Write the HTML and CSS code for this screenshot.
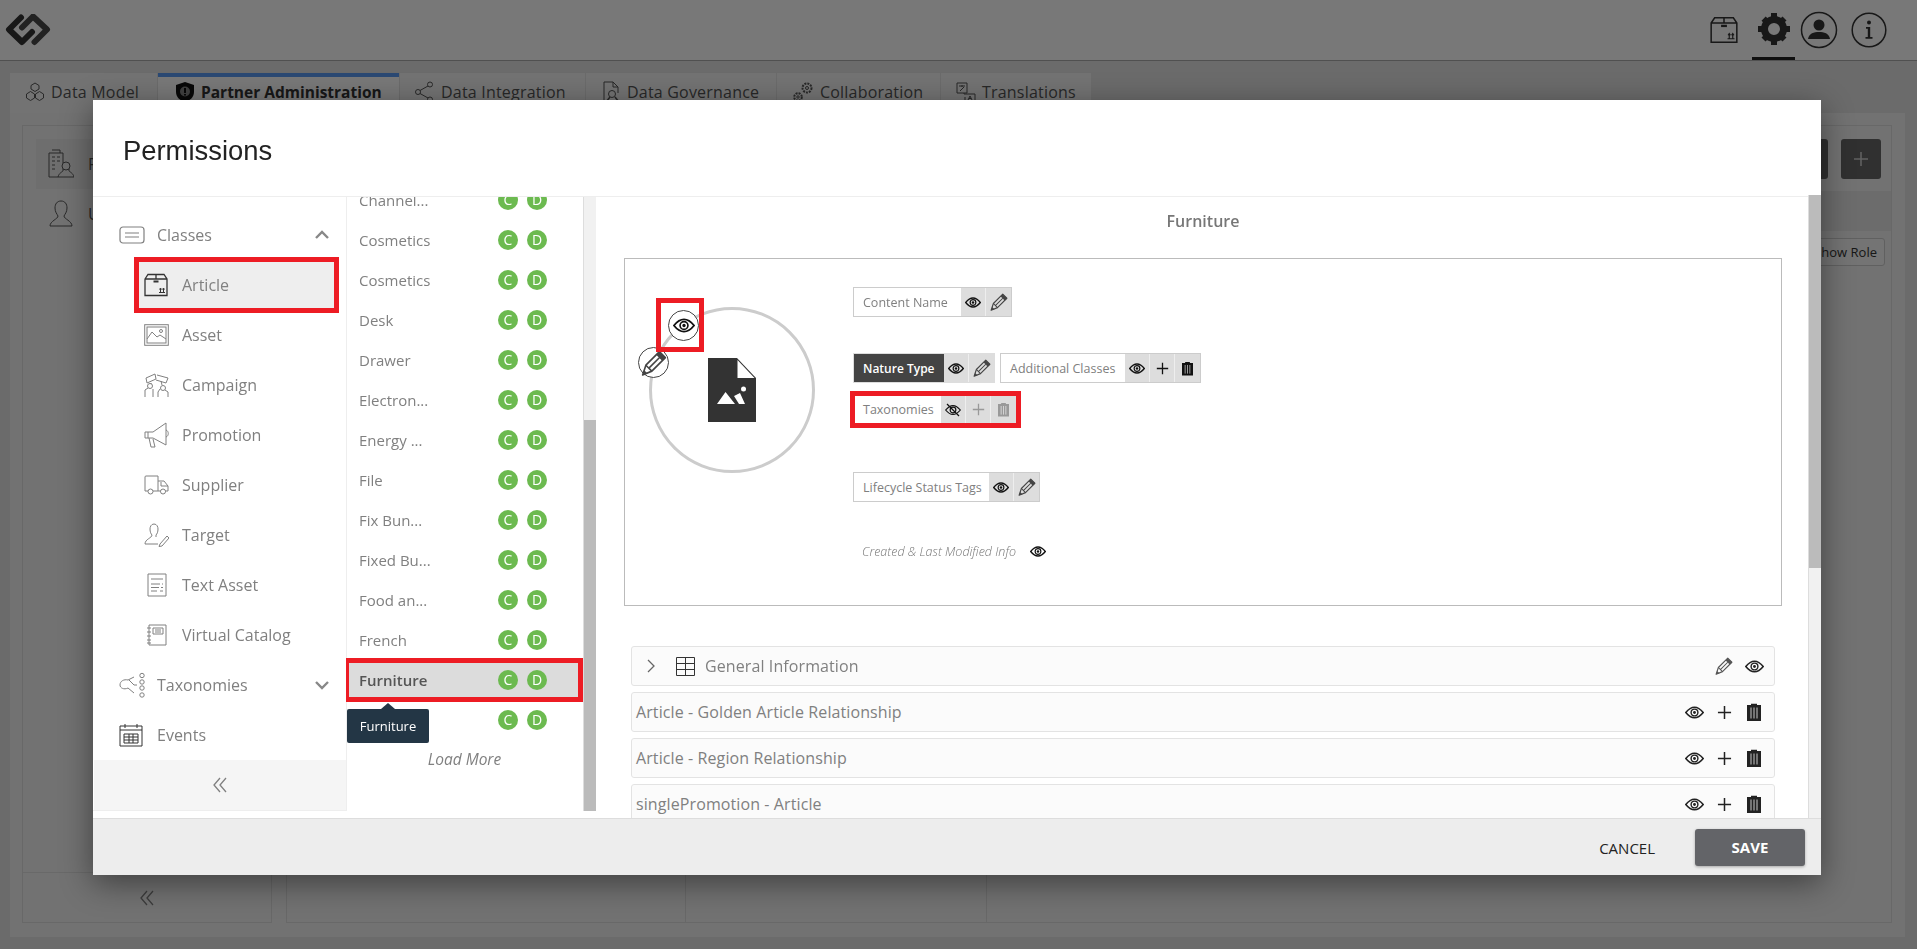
FILE: index.html
```html
<!DOCTYPE html>
<html lang="en">
<head>
    <meta charset="UTF-8">
    <meta name="viewport" content="width=device-width, initial-scale=1.0">
    <title>Permissions</title>
    <link rel="stylesheet" href="styles.css">
</head>
<body>

    <!-- shared icons -->
    <svg class="sprite" xmlns="http://www.w3.org/2000/svg">
        <symbol id="i-eye" viewBox="0 0 24 16">
            <path d="M1 8C5 3 8.500 1.300 12 1.300S19 3 23 8C19 13 15.500 14.700 12 14.700S5 13 1 8Z" fill="none" stroke="currentColor" stroke-width="2"/>
            <circle cx="12" cy="8" r="4.300" fill="none" stroke="currentColor" stroke-width="1.800"/>
            <circle cx="12" cy="8" r="1.800" fill="currentColor"/>
        </symbol>
        <symbol id="i-eye-off" viewBox="0 0 24 20">
            <path d="M1 10C5 5 8.500 3.300 12 3.300S19 5 23 10C19 15 15.500 16.700 12 16.700S5 15 1 10Z" fill="none" stroke="currentColor" stroke-width="1.800"/>
            <circle cx="12" cy="10" r="4.300" fill="none" stroke="currentColor" stroke-width="1.800"/>
            <path d="M3 1L21 19" stroke="currentColor" stroke-width="1.800"/>
        </symbol>
        <symbol id="i-pencil" viewBox="0 0 24 24">
            <path d="M1.500 23L4.500 14L17 1.500L22.500 7L10 19.500Z" fill="none" stroke="currentColor" stroke-width="1.500" stroke-linejoin="round"/>
            <path d="M7.500 16.500L19 5M4.500 14L10 19.500M14.500 4L20 9.500" fill="none" stroke="currentColor" stroke-width="1.400"/>
            <path d="M1.500 23L2.800 18.500L6 21.700Z" fill="currentColor"/>
            <path d="M17 1.500L22.500 7L20 9.500L14.500 4Z" fill="currentColor"/>
        </symbol>
        <symbol id="i-plus" viewBox="0 0 16 16">
            <path d="M8 1V15M1 8H15" stroke="currentColor" stroke-width="1.600"/>
        </symbol>
        <symbol id="i-trash" viewBox="0 0 14 18">
            <path d="M4 2V.7H10V2H14V18H0V2Z" fill="currentColor"/>
            <path d="M4 4.500V15.500M7 4.500V15.500M10 4.500V15.500" stroke="#fff" stroke-opacity=".75" stroke-width="1"/>
        </symbol>
        <symbol id="i-box" viewBox="0 0 24 24">
            <path d="M1 6L4 1.500H20L23 6V22.500H1ZM1 6H23M12 1.500V6" fill="none" stroke="currentColor" stroke-width="1.300"/>
            <path d="M9.500 7.500H14.500V9.500H9.500Z" fill="currentColor"/>
            <path d="M15 19.500H21M16.500 19V15.500M19.500 19V15.500M15.500 16.500L16.500 15L17.500 16.500M18.500 16.500L19.500 15L20.500 16.500" fill="none" stroke="currentColor" stroke-width="1"/>
        </symbol>
        <symbol id="i-chev-left" viewBox="0 0 18 18">
            <path d="M9 2L3 9L9 16M15 2L9 9L15 16" fill="none" stroke="currentColor" stroke-width="1.300"/>
        </symbol>
    </svg>

    <div class="page">
        <header class="topbar">
            <svg class="logo" width="46" height="32" viewBox="0 0 46 32">
                <path d="M16 3.500L4 15.500L17 28L27 18" fill="none" stroke="#333" stroke-width="6" stroke-linejoin="round" stroke-linecap="round"/>
                <path d="M29.500 28L42 15.500L28 2.500L17 13.500" fill="none" stroke="#4a4a4a" stroke-width="6" stroke-linejoin="round" stroke-linecap="round"/>
            </svg>
            <div class="top-icons">
                <svg class="top-box" width="28" height="28"><use href="#i-box"/></svg>
                <div class="top-gear">
                    <svg width="34" height="34" viewBox="0 0 34 34">
                        <circle cx="17" cy="17" r="9.500" fill="none" stroke="#333" stroke-width="7"/>
                        <path d="M14 1H20V7H14ZM14 27H20V33H14ZM1 14H7V20H1ZM27 14H33V20H27ZM4.500 8.700L8.700 4.500L12.500 8.300L8.300 12.500ZM25.500 21.700L29.500 25.500L25.500 29.500L21.700 25.700ZM4.500 25.500L8.300 21.700L12.300 25.700L8.500 29.500ZM21.700 8.300L25.500 4.500L29.500 8.500L25.700 12.300Z" fill="#333"/>
                    </svg>
                </div>
                <svg class="top-user" width="38" height="38" viewBox="0 0 38 38">
                    <circle cx="19" cy="19" r="17.500" fill="none" stroke="#333" stroke-width="1.500"/>
                    <circle cx="19" cy="14" r="5.500" fill="#333"/>
                    <path d="M8 28C9 22 14 21 19 21S29 22 30 28Z" fill="#333"/>
                </svg>
                <svg class="top-info" width="36" height="36" viewBox="0 0 36 36">
                    <circle cx="18" cy="18" r="16.800" fill="none" stroke="#333" stroke-width="1.500"/>
                    <circle cx="18" cy="10.500" r="2" fill="#333"/>
                    <path d="M15 15H19.200V25H21.500V26.800H14.500V25H16.800V16.800H15Z" fill="#333"/>
                </svg>
            </div>
        </header>

        <nav class="tabs">
            <div class="tab tab-model">
                <svg width="20" height="20" viewBox="0 0 20 20" fill="none" stroke="currentColor"><path d="M10 1L14 3.500V7L10 9.500L6 7V3.500ZM5.500 9.500L9.500 12V16L5.500 18.500L1.500 16V12ZM14.500 9.500L18.500 12V16L14.500 18.500L10.500 16V12Z"/></svg>
                Data Model
            </div>
            <div class="tab tab-partner active">
                <svg width="20" height="22" viewBox="0 0 20 22"><path d="M10 1L19 4V11C19 16 15 19.500 10 21.500C5 19.500 1 16 1 11V4Z" fill="#111"/><circle cx="10" cy="10.500" r="5" fill="#888"/><path d="M9 7H11V12H9ZM9 13H11V14.500H9Z" fill="#111"/></svg>
                Partner Administration
            </div>
            <div class="tab tab-integration">
                <svg width="20" height="22" viewBox="0 0 20 22" fill="none" stroke="currentColor"><circle cx="3" cy="11" r="2.500"/><circle cx="15" cy="3.500" r="2.500"/><circle cx="15" cy="18.500" r="2.500"/><path d="M5 9.500L13 5M5 12.500L13 17"/></svg>
                Data Integration
            </div>
            <div class="tab tab-gov">
                <svg width="20" height="22" viewBox="0 0 20 22" fill="none" stroke="currentColor"><path d="M12 1H3V20H8M12 1L17 6V12M12 1V6H17"/><circle cx="11" cy="13" r="3.500"/><path d="M9 16L5 21M14 16L18 21" stroke-width="1.500"/></svg>
                Data Governance
            </div>
            <div class="tab tab-collab">
                <svg width="22" height="22" viewBox="0 0 22 22" fill="none" stroke="currentColor"><circle cx="15" cy="7" r="4.500" stroke-width="2" stroke-dasharray="2 1"/><circle cx="15" cy="7" r="1.500"/><circle cx="6" cy="16" r="3.800" stroke-width="2" stroke-dasharray="2 1"/><circle cx="6" cy="16" r="1.200"/></svg>
                Collaboration
            </div>
            <div class="tab tab-trans">
                <svg width="20" height="20" viewBox="0 0 20 20" fill="none" stroke="currentColor"><path d="M1 1H11V11H1ZM3 4H9M6 3V5M4 9L8 5M8 11V12H19V19H9V15"/><path d="M12 18L14 14L16 18M13 16.500H15"/></svg>
                Translations
            </div>
        </nav>

        <main class="panel">
            <div class="panel-inner">
                <aside class="page-side">
                    <div class="page-side-item selected">
                        <svg width="26" height="30" viewBox="0 0 26 30" fill="none" stroke="currentColor"><path d="M1 28V4H15V14M4 1H12V4M4 8H7M9 8H12M4 12H7M9 12H12M4 16H7M4 20H7M1 28H10"/><circle cx="18" cy="17" r="4"/><path d="M10 28C11 24 14 23 15 22V20M26 28C25 24 22 23 21 22V20M10 28H26"/></svg>
                        <span>P</span>
                    </div>
                    <div class="page-side-item">
                        <svg width="26" height="30" viewBox="0 0 26 30" fill="none" stroke="currentColor"><path d="M13 2C9 2 7 5 7 9C7 13 9 15 10 17C10 20 2 22 2 27H24C24 22 16 20 16 17C17 15 19 13 19 9C19 5 17 2 13 2Z"/></svg>
                        <span>U</span>
                    </div>
                    <div class="page-side-foot">
                        <svg width="18" height="18"><use href="#i-chev-left"/></svg>
                    </div>
                </aside>
                <section class="page-col page-col-a"></section>
                <section class="page-col page-col-b"></section>
                <section class="page-right">
                    <div class="page-tools">
                        <button class="dark-btn" type="button"></button>
                        <button class="dark-btn" type="button"><svg width="16" height="16"><use href="#i-plus"/></svg></button>
                    </div>
                    <div class="page-band"></div>
                    <div class="page-show"><button class="show-btn" type="button">Show Role</button></div>
                </section>
            </div>
        </main>
    </div>

    <div class="overlay"></div>

    <div class="modal">
        <div class="modal-head">Permissions</div>

        <div class="modal-body">
            <div class="cols">
                <aside class="side">
                    <div class="side-group">
                        <svg width="26" height="18" viewBox="0 0 26 18" fill="none" stroke="currentColor" stroke-width="1.200"><rect x="1" y="1" width="24" height="16" rx="3"/><path d="M6 7H20M6 11H20"/></svg>
                        <span>Classes</span>
                        <svg class="chev" width="16" height="10" viewBox="0 0 16 10" fill="none" stroke="currentColor" stroke-width="2.400"><path d="M2 8L8 2L14 8"/></svg>
                    </div>
                    <div class="side-item active">
                        <svg class="dark" width="24" height="24"><use href="#i-box"/></svg>
                        <span class="gap-fix">Article</span>
                    </div>
                    <div class="side-item">
                        <svg width="25" height="22" viewBox="0 0 25 22" fill="none" stroke="currentColor"><rect x=".7" y=".7" width="23.600" height="20.600"/><rect x="3" y="3" width="19" height="16"/><path d="M3 15L8 8L13 13L16 11L22 15"/><circle cx="17" cy="7" r="1.500"/></svg>
                        <span>Asset</span>
                    </div>
                    <div class="side-item">
                        <svg width="25" height="26" viewBox="0 0 25 26" fill="none" stroke="currentColor"><path d="M2 6L11 2L12 7L3 11ZM13 3L24 6L22 11L12 8"/><circle cx="6" cy="14" r="2.500"/><circle cx="19" cy="16" r="2.500"/><path d="M1 25V18L4 16M9 25V17M14 25V20L16 17M24 25V20L21 18M7 11V12M17 9L18 13"/></svg>
                        <span>Campaign</span>
                    </div>
                    <div class="side-item">
                        <svg width="25" height="26" viewBox="0 0 25 26" fill="none" stroke="currentColor"><path d="M1 10H9L22 1V23L9 16H1ZM22 8C25 9 25 14 22 15M5 16L7 25H11L9 17M4 10V16"/></svg>
                        <span>Promotion</span>
                    </div>
                    <div class="side-item">
                        <svg width="25" height="20" viewBox="0 0 25 20" fill="none" stroke="currentColor"><path d="M4 16H1V2Q1 1 2 1H14V16H9M14 6H20L24 11V16H21M17 16H14M17 7V11H24"/><circle cx="6.500" cy="16.500" r="2.500"/><circle cx="19" cy="16.500" r="2.500"/></svg>
                        <span>Supplier</span>
                    </div>
                    <div class="side-item">
                        <svg width="25" height="24" viewBox="0 0 25 24" fill="none" stroke="currentColor"><path d="M10 1C7 1 6 4 6 6C6 9 7 11 8 12C8 15 1 16 1 21H14M10 1C13 1 14 4 14 6C14 9 13 11 12 12V14"/><path d="M16 21L23 13L25 15L18 23L15 23.500Z"/></svg>
                        <span>Target</span>
                    </div>
                    <div class="side-item">
                        <svg width="25" height="24" viewBox="0 0 25 24" fill="none" stroke="currentColor"><path d="M4 1H22V23H4ZM7 6H19M7 11H16M18 11H19M7 14.500H15M17 14.500H19M7 18H13M16 18H19"/></svg>
                        <span>Text Asset</span>
                    </div>
                    <div class="side-item">
                        <svg width="25" height="22" viewBox="0 0 25 22" fill="none" stroke="currentColor"><path d="M5 1H22V21H5ZM3 4H7M3 8H7M3 12H7M3 16H7M3 19H7M9 4H19V10H9ZM11 6H17M11 8H17"/></svg>
                        <span>Virtual Catalog</span>
                    </div>
                    <div class="side-group">
                        <svg width="26" height="26" viewBox="0 0 26 26" fill="none" stroke="currentColor"><path d="M1 13C1 9 5 7 9 8L15 5M10 8L15 13L18 13M1 13C1 16 5 18 9 16L15 21"/><circle cx="23" cy="3.500" r="2.200"/><circle cx="23" cy="10" r="2.200"/><circle cx="23" cy="16" r="2.200"/><circle cx="23" cy="23" r="2.200"/></svg>
                        <span>Taxonomies</span>
                        <svg class="chev" width="16" height="10" viewBox="0 0 16 10" fill="none" stroke="currentColor" stroke-width="2.400"><path d="M2 2L8 8L14 2"/></svg>
                    </div>
                    <div class="side-group">
                        <svg class="dark" width="24" height="24" viewBox="0 0 24 24" fill="none" stroke="currentColor"><path d="M1 3H23V23H1ZM1 7H23M6 1V5M18 1V5M5 11H19V20H5ZM5 14H19M5 17H19M10 11V20M14 11V20"/></svg>
                        <span class="gap-fix">Events</span>
                    </div>
                    <div class="side-foot">
                        <svg width="18" height="18"><use href="#i-chev-left"/></svg>
                    </div>
                </aside>

                <section class="list">
                    <div class="list-clip">
                        <div class="list-inner">
                            <div class="list-row"><span>Channel...</span><i>C</i><i>D</i></div>
                            <div class="list-row"><span>Cosmetics</span><i>C</i><i>D</i></div>
                            <div class="list-row"><span>Cosmetics</span><i>C</i><i>D</i></div>
                            <div class="list-row"><span>Desk</span><i>C</i><i>D</i></div>
                            <div class="list-row"><span>Drawer</span><i>C</i><i>D</i></div>
                            <div class="list-row"><span>Electron...</span><i>C</i><i>D</i></div>
                            <div class="list-row"><span>Energy ...</span><i>C</i><i>D</i></div>
                            <div class="list-row"><span>File</span><i>C</i><i>D</i></div>
                            <div class="list-row"><span>Fix Bun...</span><i>C</i><i>D</i></div>
                            <div class="list-row"><span>Fixed Bu...</span><i>C</i><i>D</i></div>
                            <div class="list-row"><span>Food an...</span><i>C</i><i>D</i></div>
                            <div class="list-row"><span>French</span><i>C</i><i>D</i></div>
                            <div class="list-row active"><span>Furniture</span><i>C</i><i>D</i>
                                <div class="tip">Furniture</div>
                            </div>
                            <div class="list-row"><span></span><i>C</i><i>D</i></div>
                            <div class="load-more">Load More</div>
                        </div>
                    </div>
                    <div class="bar bar-list"><div class="bar-thumb"></div></div>
                </section>
            </div>

            <section class="pane">
                <div class="pane-title">Furniture</div>
                <div class="layout-box">
                    <div class="avatar">
                        <svg width="48" height="64" viewBox="0 0 48 64">
                            <path d="M0 0H29L48 20V64H0Z" fill="#333"/>
                            <path d="M29.500 2L46.500 20H29.500Z" fill="#fff"/>
                            <circle cx="35.500" cy="31" r="2.500" fill="#fff"/>
                            <path d="M9 46L17.500 34L27 46ZM26 38L32 35L37 46H31Z" fill="#fff"/>
                        </svg>
                        <div class="badge badge-eye"><svg width="22" height="15"><use href="#i-eye"/></svg></div>
                        <div class="badge badge-pen"><svg width="26" height="26"><use href="#i-pencil"/></svg></div>
                        <div class="red-mark"></div>
                    </div>
                    <div class="fields">
                        <div class="field-row">
                            <div class="field">
                                <span class="field-label w-content">Content Name</span>
                                <span class="field-btn"><svg width="16" height="11"><use href="#i-eye"/></svg></span>
                                <span class="field-btn pen"><svg width="18" height="18"><use href="#i-pencil"/></svg></span>
                            </div>
                        </div>
                        <div class="field-row second">
                            <div class="field dark-field">
                                <span class="field-label w-nature">Nature Type</span>
                                <span class="field-btn"><svg width="16" height="11"><use href="#i-eye"/></svg></span>
                                <span class="field-btn pen"><svg width="18" height="18"><use href="#i-pencil"/></svg></span>
                            </div>
                            <div class="field">
                                <span class="field-label w-additional">Additional Classes</span>
                                <span class="field-btn"><svg width="16" height="11"><use href="#i-eye"/></svg></span>
                                <span class="field-btn"><svg width="13" height="13"><use href="#i-plus"/></svg></span>
                                <span class="field-btn"><svg width="11" height="15"><use href="#i-trash"/></svg></span>
                            </div>
                        </div>
                        <div class="field-row third">
                            <div class="field flagged">
                                <span class="field-label w-tax">Taxonomies</span>
                                <span class="field-btn"><svg width="16" height="14"><use href="#i-eye-off"/></svg></span>
                                <span class="field-btn off"><svg width="13" height="13"><use href="#i-plus"/></svg></span>
                                <span class="field-btn off"><svg width="11" height="15"><use href="#i-trash"/></svg></span>
                            </div>
                        </div>
                        <div class="field-row fourth">
                            <div class="field">
                                <span class="field-label w-life">Lifecycle Status Tags</span>
                                <span class="field-btn"><svg width="16" height="11"><use href="#i-eye"/></svg></span>
                                <span class="field-btn pen"><svg width="18" height="18"><use href="#i-pencil"/></svg></span>
                            </div>
                        </div>
                        <div class="created">
                            <span>Created &amp; Last Modified Info</span>
                            <svg width="16" height="11"><use href="#i-eye"/></svg>
                        </div>
                    </div>
                </div>

                <div class="rows">
                    <div class="row">
                        <svg class="row-chev" width="10" height="16" viewBox="0 0 10 16" fill="none" stroke="currentColor" stroke-width="1.300"><path d="M2 2L8 8L2 14"/></svg>
                        <svg class="row-table" width="19" height="19" viewBox="0 0 19 19" fill="none" stroke="currentColor"><path d="M.5 .5H18.500V18.500H.5ZM.5 6.500H18.500M.5 12.500H18.500M9.500 .5V18.500"/></svg>
                        <span class="row-text">General Information</span>
                        <span class="slot pen"><svg width="18" height="18"><use href="#i-pencil"/></svg></span>
                        <span class="slot"><svg width="19" height="13"><use href="#i-eye"/></svg></span>
                    </div>
                    <div class="row">
                        <span class="row-text">Article - Golden Article Relationship</span>
                        <span class="slot"><svg width="19" height="13"><use href="#i-eye"/></svg></span>
                        <span class="slot"><svg width="15" height="15"><use href="#i-plus"/></svg></span>
                        <span class="slot"><svg width="14" height="18"><use href="#i-trash"/></svg></span>
                    </div>
                    <div class="row">
                        <span class="row-text">Article - Region Relationship</span>
                        <span class="slot"><svg width="19" height="13"><use href="#i-eye"/></svg></span>
                        <span class="slot"><svg width="15" height="15"><use href="#i-plus"/></svg></span>
                        <span class="slot"><svg width="14" height="18"><use href="#i-trash"/></svg></span>
                    </div>
                    <div class="row">
                        <span class="row-text">singlePromotion - Article</span>
                        <span class="slot"><svg width="19" height="13"><use href="#i-eye"/></svg></span>
                        <span class="slot"><svg width="15" height="15"><use href="#i-plus"/></svg></span>
                        <span class="slot"><svg width="14" height="18"><use href="#i-trash"/></svg></span>
                    </div>
                </div>
            </section>

            <div class="bar bar-pane"><div class="bar-thumb"></div></div>
        </div>

        <div class="modal-foot">
            <button class="cancel-btn" type="button">CANCEL</button>
            <button class="save-btn" type="button">SAVE</button>
        </div>
    </div>

</body>
</html>
```

FILE: styles.css
```css
* {
    box-sizing: border-box;
}
html, body {
    height: 100%;
}
body {
    margin: 0;
    overflow: hidden;
    font-family: "Open Sans", Arial, sans-serif;
    color: #808080;
    background-color: #e3e3e3;
}
button {
    font-family: inherit;
    cursor: pointer;
}
svg {
    display: block;
    flex: none;
}
.sprite {
    position: absolute;
    width: 0;
    height: 0;
}

/* page behind the dialog */
.page {
    height: 949px;
    display: flex;
    flex-direction: column;
}
.topbar {
    height: 61px;
    flex: none;
    display: flex;
    align-items: center;
    justify-content: space-between;
    padding: 0 30px 1px 5px;
    background-color: #fff;
    border-bottom: 1px solid #aaa;
}
.top-icons {
    display: flex;
    align-items: center;
    color: #333;
}
.top-gear {
    height: 60px;
    width: 43px;
    margin-left: 14px;
    display: flex;
    align-items: center;
    justify-content: center;
    border-bottom: 3px solid #222;
    padding-top: 2px;
}
.top-user {
    margin-left: 5px;
}
.top-info {
    margin-left: 13px;
}
.tabs {
    display: flex;
    flex: none;
    height: 40px;
    margin: 12px 0 0 10px;
    gap: 1px;
    font-size: 16px;
    letter-spacing: 0.2px;
}
.tab {
    display: flex;
    align-items: center;
    gap: 6px;
    padding: 0 0 2px 15px;
    background-color: #f5f5f5;
    color: #555;
}
.tab.active {
    background-color: #fff;
    border-top: 4px solid #5b9bf5;
    font-size: 15.500px;
    letter-spacing: 0;
    font-weight: 700;
    color: #333;
    padding-bottom: 6px;
}
.tab-model { width: 147px; }
.tab-partner { width: 241px; padding-left: 17px; }
.tab-integration { width: 185px; }
.tab-gov { width: 190px; }
.tab-collab { width: 163px; }
.tab-trans { width: 150px; }
.panel {
    flex: 1;
    margin: 0 12px 12px 10px;
    padding: 12px 13px 14px 12px;
    background-color: #f3f3f3;
    min-height: 0;
}
.panel-inner {
    height: 100%;
    display: grid;
    grid-template-columns: 250px 414px 301px 1fr;
}
.page-side {
    display: flex;
    flex-direction: column;
    border: 1px solid #ddd;
    padding: 13px 13px 0;
}
.page-side-item {
    height: 50px;
    display: flex;
    align-items: center;
    gap: 14px;
    padding-left: 12px;
    color: #555;
}
.page-side-item.selected {
    background-color: #eaeaea;
}
.page-side-foot {
    margin: auto -13px 0;
    height: 50px;
    display: flex;
    align-items: center;
    justify-content: center;
    border-top: 1px solid #e0e0e0;
}
.page-col {
    border: 1px solid #ddd;
    border-left-width: 0;
}
.page-col-a {
    border-left-width: 1px;
    margin-left: 14px;
}
.page-right {
    display: flex;
    flex-direction: column;
    border: 1px solid #ddd;
    border-left-width: 0;
}
.page-tools {
    height: 65px;
    display: flex;
    justify-content: flex-end;
    align-items: center;
    gap: 13px;
    padding: 0 10px 0 0;
}
.dark-btn {
    width: 40px;
    height: 40px;
    border: none;
    border-radius: 3px;
    background-color: #666;
    color: #ccc;
    display: flex;
    align-items: center;
    justify-content: center;
}
.page-band {
    height: 40px;
    background-color: #e6e6e6;
}
.page-show {
    display: flex;
    justify-content: flex-end;
    padding: 7px 6px 0 0;
}
.show-btn {
    height: 28px;
    padding: 0 7px;
    font-size: 13px;
    color: #333;
    background-color: #f6f6f6;
    border: 1px solid #ccc;
    border-radius: 3px;
}
.overlay {
    position: fixed;
    inset: 0;
    background-color: rgba(0, 0, 0, 0.53);
}

/* dialog */
.modal {
    position: absolute;
    left: 93px;
    top: 100px;
    width: 1728px;
    height: 775px;
    display: flex;
    flex-direction: column;
    background-color: #fff;
    box-shadow: 0 8px 30px rgba(0, 0, 0, 0.45);
}
.modal-head {
    height: 97px;
    flex: none;
    padding: 5px 0 0 30px;
    display: flex;
    align-items: center;
    font-family: "Liberation Sans", Arial, sans-serif;
    font-size: 27.400px;
    color: #222;
    border-bottom: 1px solid #eee;
}
.modal-body {
    height: 621px;
    flex: none;
    display: flex;
}
.cols {
    display: flex;
    height: 614px;
    flex: none;
}
.side {
    width: 253px;
    display: flex;
    flex-direction: column;
    padding-top: 13px;
    font-size: 16px;
    border-bottom: 1px solid #eee;
}
.side-group {
    height: 50px;
    flex: none;
    display: flex;
    align-items: center;
    gap: 12px;
    padding-left: 26px;
    padding-right: 16px;
}
.chev {
    margin-left: auto;
    color: #888;
}
.side-item {
    height: 50px;
    flex: none;
    display: flex;
    align-items: center;
    gap: 13px;
    margin-left: 44px;
    width: 199px;
    padding-left: 7px;
}
.side-item.active {
    background-color: #eee;
    outline: 5px solid #ed1c24;
    outline-offset: -2px;
}
.side svg.dark {
    color: #333;
}
.gap-fix {
    margin-left: 1px;
}
.side-group .gap-fix {
    margin-left: 2px;
}
.side-foot {
    height: 50px;
    flex: none;
    margin: auto 0 1px 1px;
    display: flex;
    align-items: center;
    justify-content: center;
    background-color: #f5f5f5;
}
.list {
    width: 252px;
    display: flex;
    border-left: 1px solid #eee;
}
.list-clip {
    width: 237px;
    overflow: hidden;
    margin-left: -1px;
}
.list-inner {
    margin-top: -17px;
}
.list-row {
    height: 40px;
    display: flex;
    align-items: center;
    padding-left: 13px;
    font-size: 15px;
    position: relative;
    margin-right: 2px;
}
.list-row span {
    width: 139px;
}
.list-row i {
    width: 20px;
    height: 20px;
    border-radius: 50%;
    margin-right: 9px;
    background-color: #6cba50;
    color: #fff;
    font-style: normal;
    font-size: 14px;
    line-height: 19px;
    text-align: center;
}
.list-row.active {
    background-color: #dcdcdc;
    color: #555;
    font-weight: 600;
    outline: 5px solid #ed1c24;
    outline-offset: -3px;
    z-index: 1;
}
.list-row.active i {
    font-weight: 400;
}
.tip {
    position: absolute;
    left: 1px;
    top: 49px;
    width: 82px;
    height: 34px;
    border-radius: 2px;
    background-color: #233645;
    color: #fff;
    font-size: 13px;
    font-weight: 400;
    line-height: 34px;
    text-align: center;
}
.tip::before {
    content: "";
    position: absolute;
    left: 34px;
    top: -6px;
    border: 7px solid transparent;
    border-top-width: 0;
    border-bottom: 6px solid #233645;
}
.load-more {
    height: 38px;
    line-height: 38px;
    text-align: center;
    font-size: 15.500px;
    font-style: italic;
}
.bar {
    width: 13px;
    flex: none;
    display: flex;
    flex-direction: column;
    background-color: #f1f1f1;
    border-left: 1px solid #ddd;
}
.bar-thumb {
    background-color: #bbb;
}
.bar-list {
    padding-top: 223px;
}
.bar-list .bar-thumb {
    flex: 1;
}
.bar-pane {
    margin-top: -2px;
    height: 623px;
}
.bar-pane .bar-thumb {
    height: 373px;
}

/* right pane */
.pane {
    flex: 1;
    min-width: 0;
    overflow: hidden;
}
.pane-title {
    margin-top: 14px;
    height: 20px;
    line-height: 20px;
    text-align: center;
    font-size: 16px;
    font-weight: 600;
    color: #777;
}
.layout-box {
    margin: 27px 0 0 26px;
    width: 1158px;
    height: 348px;
    border: 1px solid #bbb;
    display: flex;
    align-items: flex-start;
}
.avatar {
    position: relative;
    width: 166px;
    height: 166px;
    margin: 48px 0 0 24px;
    border: 3px solid #ccc;
    border-radius: 50%;
    display: flex;
    align-items: center;
    justify-content: center;
    flex: none;
}
.badge {
    position: absolute;
    width: 31px;
    height: 31px;
    border: 1px solid #444;
    border-radius: 50%;
    background-color: #fff;
    display: flex;
    align-items: center;
    justify-content: center;
    color: #111;
}
.badge-eye {
    left: 16px;
    top: 0;
    z-index: 1;
}
.badge-pen {
    left: -14px;
    top: 37px;
    color: #444;
}
.red-mark {
    position: absolute;
    left: 4px;
    top: -12px;
    width: 48px;
    height: 54px;
    border: 5px solid #ed1c24;
}
.fields {
    margin: 28px 0 0 38px;
    font-size: 12.500px;
}
.field-row {
    display: flex;
    gap: 5px;
}
.field-row.second {
    margin-top: 36px;
}
.field-row.third {
    margin: 13px 0 0 2px;
}
.field-row.fourth {
    margin-top: 49px;
}
.field {
    height: 30px;
    display: flex;
    background-color: #ddd;
    border: 1px solid #ccc;
}
.field-label {
    display: flex;
    align-items: center;
    padding-left: 9px;
    background-color: #fff;
}
.w-content { width: 107px; }
.w-nature { width: 90px; }
.w-additional { width: 124px; }
.w-tax { width: 86px; padding-left: 8px; }
.w-life { width: 135px; }
.dark-field {
    border-color: #ddd;
}
.dark-field .field-label {
    background-color: #444;
    color: #fff;
    font-size: 12px;
    font-weight: 600;
}
.field-btn {
    width: 25px;
    display: flex;
    align-items: center;
    justify-content: center;
    color: #111;
    border-right: 1px solid #eee;
}
.field-btn:last-child {
    border-right: none;
}
.field-btn.pen {
    color: #444;
}
.field-btn.off {
    color: #999;
}
.flagged {
    height: 27px;
    border: none;
    outline: 5px solid #ed1c24;
}
.created {
    margin: 39px 0 0 9px;
    height: 20px;
    display: flex;
    align-items: center;
    gap: 14px;
    font-style: italic;
    color: #777;
    font-weight: 300;
}
.created svg {
    color: #111;
}
.rows {
    margin: 40px 0 0 33px;
    width: 1144px;
    display: flex;
    flex-direction: column;
    gap: 6px;
}
.row {
    height: 40px;
    flex: none;
    display: flex;
    align-items: center;
    padding: 0 5px 0 4px;
    background-color: #fbfbfb;
    border: 1px solid #e3e3e3;
    border-radius: 3px;
    font-size: 16px;
    letter-spacing: 0.1px;
}
.row-chev {
    margin-left: 10px;
    color: #666;
}
.row-table {
    margin: 0 10px 0 20px;
    color: #333;
}
.row-text {
    margin-right: auto;
}
.slot {
    width: 30px;
    display: flex;
    align-items: center;
    justify-content: center;
    color: #222;
}
.slot.pen {
    color: #555;
}
.modal-foot {
    height: 57px;
    flex: none;
    display: flex;
    align-items: center;
    justify-content: flex-end;
    padding-right: 16px;
    gap: 40px;
    background-color: #ededed;
    border-top: 1px solid #ddd;
}
.cancel-btn {
    border: none;
    background: none;
    padding: 0;
    font-size: 15px;
    color: #222;
    margin-top: 2px;
}
.save-btn {
    width: 110px;
    height: 37px;
    border: none;
    border-radius: 3px;
    background-color: #636468;
    color: #fff;
    font-size: 15px;
    font-weight: 700;
    box-shadow: 0 1px 3px rgba(0, 0, 0, 0.3);
}
```
